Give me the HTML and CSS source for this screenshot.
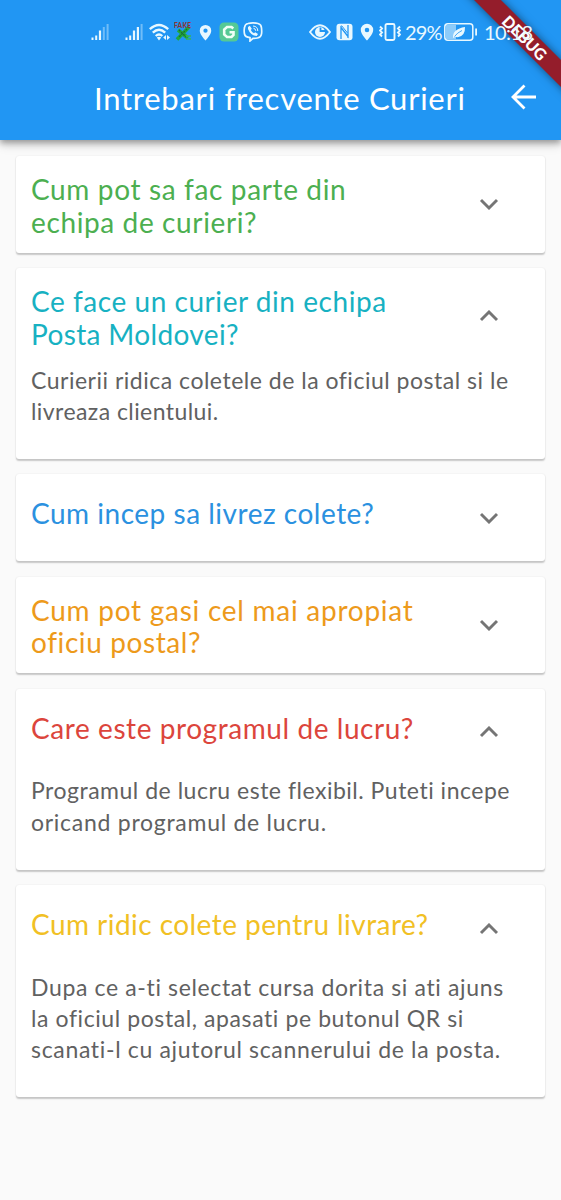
FILE: index.html
```html
<!DOCTYPE html>
<html lang="ro">
<head>
<meta charset="utf-8">
<title>Intrebari frecvente Curieri</title>
<link rel="stylesheet" href="styles.css">
</head>
<body>
<svg class="defs" width="0" height="0">
  <symbol id="down" viewBox="0 0 20 12"><path d="M2 2l8 8 8-8" fill="none" stroke="#757575" stroke-width="2.9"/></symbol>
  <symbol id="up" viewBox="0 0 20 12"><path d="M2 10l8-8 8 8" fill="none" stroke="#757575" stroke-width="2.9"/></symbol>
  <symbol id="pin" viewBox="0 0 14 18"><path fill-rule="evenodd" d="M7 0.8A6.2 6.2 0 0 0 .8 7c0 4.2 6.2 10.5 6.2 10.5S13.200 11.200 13.200 7A6.200 6.200 0 0 0 7 .8zM7 4.700a2.300 2.300 0 1 1 0 4.600a2.300 2.300 0 0 1 0-4.600z"/></symbol>
</svg>
<header class="top">
  <div class="status">
    <div class="group">
      <svg class="signal" width="19" height="18" viewBox="0 0 19 18"><path d="M.5 14.500h2v2.500h-2zM4.200 12.500h2v4.500h-2zM7.900 7.500h2.200v9.500H7.900z"/><path opacity=".4" d="M11.800 4h2v13h-2zM15.600 1h2v16h-2z"/></svg>
      <svg class="signal two" width="19" height="18" viewBox="0 0 19 18"><path d="M.5 14.500h2v2.500h-2zM4.200 12.500h2v4.500h-2zM7.900 7.500h2.200v9.500H7.900zM11.800 4h2.200v13h-2.200z"/><path opacity=".4" d="M15.600 1h2v16h-2z"/></svg>
      <svg class="wifi" width="22" height="19" viewBox="0 0 22 19"><g fill="none" stroke="#e8f8ff" stroke-width="2.300"><path d="M.8 6.200q9.200-8.400 18.400 0M3.800 9.700q6.200-5.800 12.400 0M6.700 13q3.300-3 6.600 0"/></g><path d="M7.800 14.500q2.200-1.700 4.400 0L10 17.500zM17 12v5l-2.800-2.500zM18 12v5l3-2.500z"/></svg>
      <svg class="fake" width="19" height="20" viewBox="0 0 19 20"><path d="M4 8l10 8M15 5L3 17.500" stroke="#20a83b" stroke-width="3.600" fill="none"/><path d="M5 8l7 7M13 7l-8 8" stroke="#176b35" stroke-width="1.200" stroke-dasharray="2 1"/><path d="M12 14h5m-5 3h5" stroke="#35b45e" stroke-width="1.500"/><text x="0" y="6" font-size="6.500" textLength="17" class="fake-text">FAKE</text></svg>
      <svg class="pin-left" width="13" height="17"><use href="#pin"/></svg>
      <svg class="gapp" width="20" height="20" viewBox="0 0 20 20"><rect x=".5" y=".5" width="19" height="19" rx="4.500" fill="#55c995"/><path d="M14.300 6.500l-1.800-1.500H8L5.200 7.500v5L8 15h4.500l2-2v-2.800h-4" fill="none" stroke="#effff6" stroke-width="2.600"/></svg>
      <svg class="viber" width="20" height="20" viewBox="0 0 20 20"><path d="M5 1.500Q10 .3 15 1.500q3.300.8 3.500 4.500.4 4 0 6-.5 3.500-4 4-2.500.5-4.500.3L7 19v-3.300Q2 15 1.500 12 .8 8.500 1.500 5.500 2 2 5 1.500z" fill="none" stroke="#e8f8ff" stroke-width="1.700"/><path d="M5 5l1.800-1.300L8.800 6.700l-1 1.300q1 2.300 3.200 3.200l1.200-1L15 12l-1.300 2Q7.500 13.500 5 7z"/><path d="M10 4q4.700.3 4.800 5M10.500 6.300q2 .2 2.300 2.500" fill="none" stroke="#e8f8ff" stroke-width="1"/></svg>
    </div>
    <div class="group right">
      <svg width="22" height="16" viewBox="0 0 22 16"><path d="M1 8q10-13.500 20 0-10 13.500-20 0z" fill="none" stroke="#e8f8ff" stroke-width="1.800"/><circle cx="11" cy="8" r="5"/><path d="M11.500 3.500v3.500h4.500" fill="none" stroke="#2196f3" stroke-width="1.800"/></svg>
      <svg class="nfc" width="17" height="18" viewBox="0 0 17 18"><rect x=".5" y=".8" width="16" height="16.400" rx="3"/><path d="M5 16V4.500l7 9V2M5 4.500V3M12 13.500V15" fill="none" stroke="#2196f3" stroke-width="1.300"/><path d="M5.500 2.500l6 7.500" fill="none" stroke="#2196f3" stroke-width="1"/></svg>
      <svg class="pin-right" width="14" height="18"><use href="#pin"/></svg>
      <svg class="vibrate" width="22" height="18" viewBox="0 0 22 18"><g fill="none" stroke="#e8f8ff" stroke-width="1.900"><rect x="6.500" y="1" width="9" height="16" rx="1.500"/><path d="M1 3.500l2 2-2 2 2 2-2 2 2 2M21 3.500l-2 2 2 2-2 2 2 2-2 2"/></g></svg>
      <span class="percent">29%</span>
      <svg class="battery" width="34" height="18" viewBox="0 0 34 18"><rect x="2" y="2" width="10" height="14" fill="#8ccbfa"/><rect x=".8" y=".8" width="28" height="16.400" rx="3" fill="none" stroke="#e8f8ff" stroke-width="1.500"/><path d="M31.200 5.500h1.800v7h-1.800zM9 14.500q-.5-8.500 12-10.500.3 8.500-6.500 10-2 .5-3.500-.5l-1 1.500z"/><path d="M10.500 13.500q3-4 7.500-6" fill="none" stroke="#48a9f6" stroke-width="1"/></svg>
      <span class="clock">10:18</span>
    </div>
  </div>
  <div class="appbar">
    <h1>Intrebari frecvente Curieri</h1>
    <svg class="back" width="26" height="26" viewBox="0 0 26 26"><path d="M13.500 1.500L2 13l11.500 11.500M2 13h23" fill="none" stroke="#fff" stroke-width="2.800"/></svg>
  </div>
  <div class="banner-clip"><div class="banner">DEBUG</div></div>
</header>
<main class="list">
  <section class="card">
    <div class="head green"><h2><span class="t1">Cum pot sa fac parte din</span><span class="t2">echipa de curieri?</span></h2><svg class="chevron"><use href="#down"/></svg></div>
  </section>
  <section class="card">
    <div class="head cyan"><h2><span class="t3">Ce face un curier din echipa</span><span class="t4">Posta Moldovei?</span></h2><svg class="chevron"><use href="#up"/></svg></div>
    <p><span class="b1">Curierii ridica coletele de la oficiul postal si le</span><span class="b2">livreaza clientului.</span></p>
  </section>
  <section class="card">
    <div class="head single blue"><h2><span class="t5">Cum incep sa livrez colete?</span></h2><svg class="chevron"><use href="#down"/></svg></div>
  </section>
  <section class="card">
    <div class="head orange"><h2><span class="t6">Cum pot gasi cel mai apropiat</span><span class="t7">oficiu postal?</span></h2><svg class="chevron"><use href="#down"/></svg></div>
  </section>
  <section class="card">
    <div class="head single red"><h2><span class="t8">Care este programul de lucru?</span></h2><svg class="chevron"><use href="#up"/></svg></div>
    <p><span class="b3">Programul de lucru este flexibil. Puteti incepe</span><span class="b4">oricand programul de lucru.</span></p>
  </section>
  <section class="card">
    <div class="head single yellow"><h2><span class="t9">Cum ridic colete pentru livrare?</span></h2><svg class="chevron"><use href="#up"/></svg></div>
    <p><span class="b5">Dupa ce a-ti selectat cursa dorita si ati ajuns</span><span class="b6">la oficiul postal, apasati pe butonul QR si</span><span class="b7">scanati-l cu ajutorul scannerului de la posta.</span></p>
  </section>
</main>
</body>
</html>
```
FILE: styles.css
```css
* { box-sizing: border-box; }
body { margin: 0; height: 1200px; overflow: hidden; background: #fafafa; font-family: Lato, "Noto Sans", sans-serif; }
h1, h2, p { margin: 0; font-weight: 400; }
svg { flex: none; display: block; }
.defs { position: absolute; }
.top { position: relative; height: 140px; background: #2196f3; box-shadow: 0 3px 6px rgba(0,0,0,.3), 0 5px 10px rgba(0,0,0,.14); color: #fff; }
.status { height: 64px; display: flex; justify-content: space-between; padding: 0 16px 0 91px; fill: #e8f8ff; color: #e8f8ff; }
.group { display: flex; align-items: center; height: 64px; }
.two { margin-left: 15px; }
.wifi { margin-left: 5px; }
.fake { margin-left: 3px; }
.fake-text { font-weight: 900; fill: #8a3434; }
.pin-left { margin-left: 6px; }
.gapp { margin-left: 7px; }
.viber { margin-left: 4px; }
.right { width: 236px; flex: none; position: relative; z-index: 2; }
.nfc { margin-left: 5px; }
.pin-right { margin-left: 7px; }
.vibrate { margin-left: 5px; }
.percent { width: 38px; margin-left: 4px; font-size: 20px; line-height: 24px; letter-spacing: -.9px; flex: none; }
.battery { margin-left: 1px; }
.clock { margin-left: 6px; font-size: 20px; line-height: 24px; letter-spacing: -.6px; }
.appbar { height: 76px; display: flex; align-items: flex-start; padding: 16px 24px 0 94px; justify-content: space-between; }
h1 { font-size: 31px; line-height: 36px; letter-spacing: .74px; white-space: nowrap; }
.back { margin-top: 4px; }
.banner-clip { position: absolute; top: 0; right: 0; width: 110px; height: 110px; overflow: hidden; }
.banner { position: absolute; left: -6px; top: 28px; width: 160px; height: 19px; background: #941d2b; box-shadow: 0 0 9px rgba(0,0,0,.5); transform: rotate(45deg); font-size: 16px; line-height: 19px; font-weight: 900; text-align: center; }
.list { padding: 16px 16px 0; display: flex; flex-direction: column; gap: 15.600px; }
.card { background: #fff; border-radius: 3px; box-shadow: 0 1.500px 1.500px rgba(0,0,0,.2), 0 0 2px rgba(0,0,0,.07); padding: 0 16px 0 15px; }
.card:has(p) { padding-bottom: 31.500px; }
.head { height: 96.600px; padding: 17px 30px 0 0; display: flex; justify-content: space-between; }
.head.single { height: 86.600px; padding-top: 23px; }
h2 { font-size: 28px; line-height: 32.600px; }
h2 span, p span { display: block; width: max-content; white-space: nowrap; }
p { font-size: 23px; line-height: 31.300px; color: #616161; }
.chevron { width: 20px; height: 12px; margin-top: 25px; }
.single .chevron { margin-top: 14.500px; }
.green { color: #4caf50; }
.cyan { color: #17b1c2; }
.blue { color: #2b91e0; }
.orange { color: #ed9a1b; }
.red { color: #dc453c; }
.yellow { color: #f1c024; }
/* tracking per line */
.t1 { letter-spacing: .64px; }
.t2 { letter-spacing: .62px; }
.t3 { letter-spacing: .55px; }
.t4 { letter-spacing: .36px; }
.t5 { letter-spacing: .51px; }
.t6 { letter-spacing: .74px; }
.t7 { letter-spacing: .60px; }
.t8 { letter-spacing: .57px; }
.t9 { letter-spacing: .45px; }
.b1 { letter-spacing: .51px; }
.b2 { letter-spacing: .43px; }
.b3 { letter-spacing: .51px; }
.b4 { letter-spacing: .73px; }
.b5 { letter-spacing: .64px; }
.b6 { letter-spacing: .59px; }
.b7 { letter-spacing: .67px; }
```
